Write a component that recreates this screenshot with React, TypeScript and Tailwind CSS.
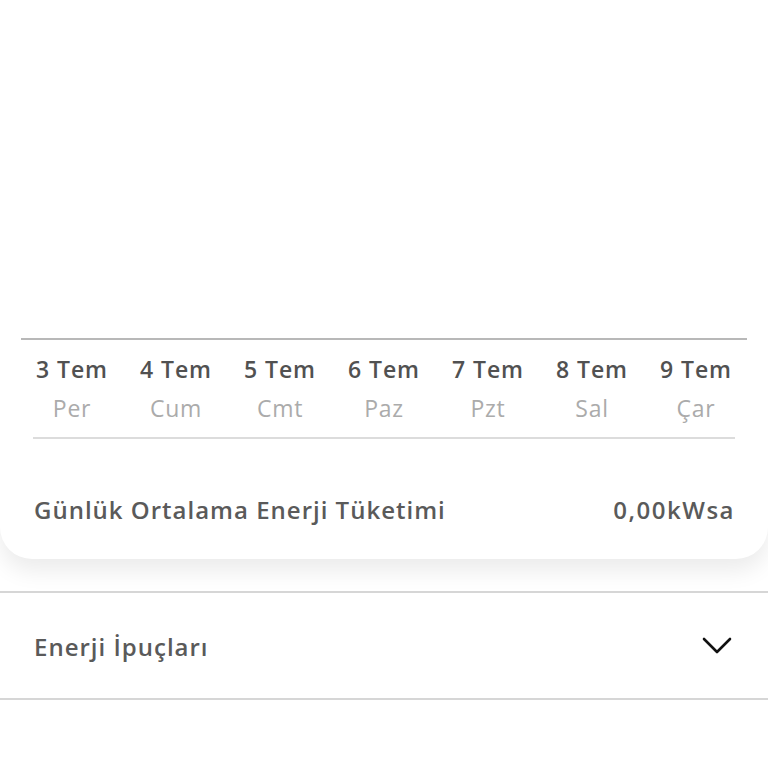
import React from 'react';

const days = [
  { date: '3 Tem', day: 'Per' },
  { date: '4 Tem', day: 'Cum' },
  { date: '5 Tem', day: 'Cmt' },
  { date: '6 Tem', day: 'Paz' },
  { date: '7 Tem', day: 'Pzt' },
  { date: '8 Tem', day: 'Sal' },
  { date: '9 Tem', day: 'Çar' },
];

const Chevron = () => (
  <svg width="30" height="18" viewBox="0 0 30 18" fill="none">
    <path d="M2 2L15 15L28 2" stroke="#111" strokeWidth="2.6" strokeLinecap="round" strokeLinejoin="round" />
  </svg>
);

const App: React.FC = () => {
  return (
    <div className="min-h-[768px] bg-white font-['Open_Sans',sans-serif] overflow-hidden">
      {/* consumption card */}
      <div className="bg-white rounded-b-[32px] shadow-[0_12px_22px_rgba(0,0,0,0.08)]">
        <div className="h-[338px]" />
        <div className="mx-[21px] h-[2px] bg-[#b8b8b8]" />
        <div className="grid grid-cols-7 px-[20px] pt-[14px]">
          {days.map((d) => (
            <div key={d.date} className="flex flex-col items-center">
              <span className="text-[23px] leading-[30px] font-semibold tracking-[0.9px] text-[#515151]">{d.date}</span>
              <span className="mt-[9px] text-[23px] leading-[30px] tracking-[0.7px] text-[#ababab]">{d.day}</span>
            </div>
          ))}
        </div>
        <div className="mx-[33px] mt-[14px] h-[2px] bg-[#dcdcdc]" />
        <div className="flex items-center justify-between pl-[34px] pr-[33px] pt-[56px] pb-[34px]">
          <span className="text-[24px] leading-[30px] font-semibold tracking-[1px] text-[#5a5a5a]">Günlük Ortalama Enerji Tüketimi</span>
          <span className="text-[24px] leading-[30px] font-semibold tracking-[1.5px] text-[#5a5a5a]">0,00kWsa</span>
        </div>
      </div>

      <div className="mt-[32px] h-[2px] bg-[#d6d6d6]" />
      <div className="flex items-center justify-between pl-[34px] pr-[36px] h-[105px]">
        <span className="pt-[3px] text-[24px] leading-[30px] font-semibold tracking-[1px] text-[#5a5a5a]">Enerji İpuçları</span>
        <Chevron />
      </div>
      <div className="h-[2px] bg-[#d6d6d6]" />
    </div>
  );
};

export default App;
